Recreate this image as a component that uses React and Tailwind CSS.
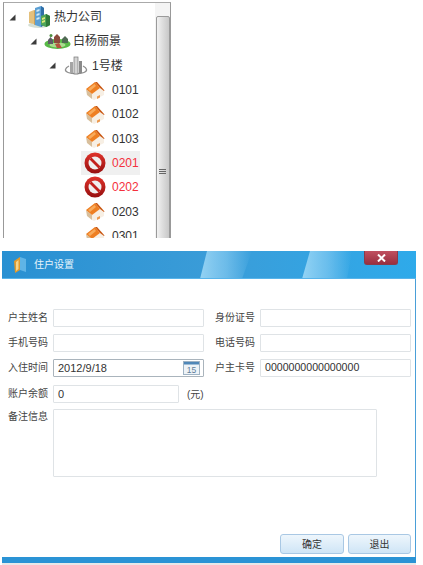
import React from 'react';

const cjk = "font-['Liberation_Sans','Noto_Sans_CJK_SC',sans-serif]";

const Arrow = () => (
    <svg width="7" height="7" viewBox="0 0 7 7" className="shrink-0">
        <path d="M6.500 0.500V6.500H0.500Z" fill="#3c3c3c" />
    </svg>
);

const CompanyIcon = () => (
    <svg width="24" height="24" viewBox="0 0 24 24" className="shrink-0">
        <ellipse cx="12" cy="20" rx="11" ry="3" fill="#d5dfd4" />
        <path d="M2 7l5-2v14l-5-1z" fill="#e4c07c" />
        <path d="M7 5l3 1v13l-3 1z" fill="#c9a05c" />
        <path d="M8 3l6-2 3 2v17l-3 2-6-2z" fill="#5b9fd4" />
        <path d="M14 1l3 2v17l-3 2z" fill="#2f6fa8" />
        <path d="M9.500 5l3-1v2l-3 1zM9.500 9l3-1v2l-3 1zM9.500 13l3-1v2l-3 1z" fill="#cfe9f7" />
        <path d="M14 11l5-2 4 2v9l-4 2-5-2z" fill="#4fa658" />
        <path d="M19 9l4 2v9l-4 2z" fill="#2f7a3a" />
        <path d="M15 13l3-1v2l-3 1zM15 16l3-1v2l-3 1z" fill="#dce87a" />
    </svg>
);

const EstateIcon = () => (
    <svg width="27" height="18" viewBox="0 0 27 18" className="shrink-0">
        <ellipse cx="13.500" cy="12" rx="13" ry="5" fill="#58b947" />
        <ellipse cx="13.500" cy="13" rx="8" ry="2.500" fill="#a9dc8f" />
        <path d="M10 5l3-3 3 3v6h-6z" fill="#8c4a3c" />
        <path d="M4 8l2.500-3 2.500 3v4H4z" fill="#5f5c66" />
        <path d="M18 7l3-3 3 3v4h-6z" fill="#4f6a52" />
        <path d="M11 12l4-1 3 5-5 0z" fill="#b5533f" />
        <circle cx="7" cy="3.500" r="1.500" fill="#4d8d3e" />
    </svg>
);

const TowerIcon = () => (
    <svg width="24" height="20" viewBox="0 0 24 20" className="shrink-0">
        <path d="M5 10C1 12 0 15 4 16.500C8 18 16 18 20 16.500C24 15 23 12 19 10" fill="none" stroke="#8f8f8f" strokeWidth="1.300" />
        <rect x="6" y="6" width="3" height="11" fill="#a5a5a5" />
        <rect x="10" y="1" width="4" height="17" fill="#d4d4d4" stroke="#777" strokeWidth="0.700" />
        <rect x="15" y="5" width="3" height="12" fill="#8a8a8a" />
    </svg>
);

const HouseIcon = () => (
    <svg width="20" height="19" viewBox="0 0 20 19" className="shrink-0">
        <path d="M1 8L7 13V18L2 14Z" fill="#d8bf9c" />
        <path d="M7 13L15 7L19 10V14L9 19L7 18Z" fill="#f7efe4" />
        <path d="M12 15.500L15 14V16.500L12 18Z" fill="#ec9a50" />
        <path d="M1 8L10 1L15 7L7 13Z" fill="#ee7f22" />
        <path d="M10 1L12 1L19.500 9.500L19 10L15 7Z" fill="#c9550f" />
        <path d="M3 8L9.500 3L11 5L5 10Z" fill="#f8ab5c" />
    </svg>
);

const BlockedIcon = () => (
    <svg width="22" height="22" viewBox="0 0 22 22" className="shrink-0">
        <defs>
            <linearGradient id="stop-ring" x1="0" y1="0" x2="0" y2="1">
                <stop offset="0" stopColor="#e0332b" />
                <stop offset="1" stopColor="#960f0f" />
            </linearGradient>
        </defs>
        <circle cx="11" cy="11" r="10.500" fill="url(#stop-ring)" />
        <circle cx="11" cy="11" r="6.500" fill="#f0eeee" />
        <path d="M5.500 7.500L7.500 5.500L16.500 14.500L14.500 16.500Z" fill="#c3201c" />
    </svg>
);

const CalendarIcon = () => (
    <svg width="17" height="14" viewBox="0 0 17 14" className="shrink-0">
        <rect x="0.500" y="0.500" width="16" height="13" fill="#eef3f7" stroke="#9fb3c4" />
        <rect x="1" y="1" width="15" height="2.500" fill="#4f87b8" />
        <text x="8.500" y="12" textAnchor="middle" fontSize="8.500" fill="#5f7f9b" fontFamily="Liberation Sans">15</text>
    </svg>
);

const leaves = [
    { name: '0101' },
    { name: '0102' },
    { name: '0103' },
    { name: '0201', blocked: true, selected: true },
    { name: '0202', blocked: true },
    { name: '0203' },
    { name: '0301' },
];

const TreeRow = ({ className, children }) => (
    <div className={`flex h-[24.3px] items-center text-[12px] text-[#333] ${className}`}>{children}</div>
);

const Tree = () => (
    <div className="ml-[3px] mt-[2px] flex h-[236px] w-[168px] overflow-hidden border-x border-t border-x-[#999] border-t-[#aaa] bg-white">
        <div className="min-w-0 flex-1 overflow-hidden pt-[2px]">
            <TreeRow className="pl-[5px]">
                <Arrow />
                <span className="ml-[11px]"><CompanyIcon /></span>
                <span className="ml-[3px]">热力公司</span>
            </TreeRow>
            <TreeRow className="pl-[26px]">
                <Arrow />
                <span className="ml-[7px]"><EstateIcon /></span>
                <span className="ml-[2px]">白杨丽景</span>
            </TreeRow>
            <TreeRow className="pl-[45px]">
                <Arrow />
                <span className="ml-[8px]"><TowerIcon /></span>
                <span className="ml-[4px]">1号楼</span>
            </TreeRow>
            {leaves.map(leaf => (
                <TreeRow key={leaf.name} className="pl-[77px]">
                    <div className={`flex h-full w-[59px] items-center ${leaf.selected ? 'bg-[#f0f0f0]' : ''}`}>
                        <div className="flex w-[27px] shrink-0 justify-center">
                            {leaf.blocked ? <BlockedIcon /> : <HouseIcon />}
                        </div>
                        <span className={`ml-[4px] ${leaf.blocked ? 'text-[#f4303c]' : ''}`}>{leaf.name}</span>
                    </div>
                </TreeRow>
            ))}
        </div>
        <div className="flex w-[15px] shrink-0 flex-col items-center bg-[#f4f4f4]">
            <svg width="7" height="4" viewBox="0 0 7 4" className="mt-[6px]">
                <path d="M3.500 0L7 4H0Z" fill="#8a8a8a" />
            </svg>
            <div className="mt-[7px] flex h-[230px] w-[14px] shrink-0 flex-col items-center rounded-[2px] border border-[#9a9a9a] bg-gradient-to-r from-[#f2f2f2] via-[#dcdcdc] to-[#c8c8c8] pt-[152px]">
                <div className="h-[1px] w-[7px] bg-[#666]" />
                <div className="mt-[1px] h-[1px] w-[7px] bg-[#666]" />
                <div className="mt-[1px] h-[1px] w-[7px] bg-[#666]" />
            </div>
        </div>
    </div>
);

const TitleBar = () => (
    <div className="relative flex h-[28px] items-center overflow-hidden border-b border-[#58b4ea] bg-gradient-to-r from-[#2890d2] via-[#3a9cd8] to-[#2eaaea] pl-[11px]">
        <svg width="423" height="28" viewBox="0 0 423 28" className="absolute left-0 top-0">
            <defs>
                <linearGradient id="streak" x1="0" y1="0" x2="1" y2="0">
                    <stop offset="0" stopColor="#a4dcf8" stopOpacity="0.85" />
                    <stop offset="0.5" stopColor="#8fd0f4" stopOpacity="0.6" />
                    <stop offset="1" stopColor="#8fd0f4" stopOpacity="0" />
                </linearGradient>
            </defs>
            <path d="M198 28L205 0H250L240 28Z" fill="url(#streak)" />
            <path d="M300 28L308 0H350L345 28Z" fill="url(#streak)" />
        </svg>
        <svg width="14" height="18" viewBox="0 0 14 18" className="relative shrink-0">
            <path d="M1 5l6-4v13l-5 3z" fill="#e09a2e" />
            <path d="M7 1l6 2v13l-6-2z" fill="#5fb4e6" />
            <path d="M3 6l2.500-2v9l-2.500 2z" fill="#f6d48a" />
        </svg>
        <span className={`relative ml-[7px] text-[10px] text-[#e6f4fc] ${cjk}`}>住户设置</span>
        <div className="absolute left-[362px] top-0 flex h-[14px] w-[34px] items-center justify-center rounded-b-[3px] border border-t-0 border-[#8b3a4a] bg-gradient-to-b from-[#c05060] to-[#9a2f40]">
            <svg width="9" height="8" viewBox="0 0 9 8">
                <path d="M1 0.500L8 7.500M8 0.500L1 7.500" stroke="#fff" strokeWidth="2" />
            </svg>
        </div>
    </div>
);

const Label = ({ children, className = '' }) => (
    <span className={`w-[40px] shrink-0 text-[10px] leading-none text-[#444] ${className}`}>{children}</span>
);

const Field = ({ value, className = 'border-[#dfe3e6] text-[11px]', children, width }) => (
    <div className={`ml-[5px] flex h-[18px] items-center justify-between rounded-[1px] border pl-[4px] pr-[3px] text-[#333] ${width} ${className}`}>
        <span>{value}</span>
        {children}
    </div>
);

const DialogButton = ({ children, width }) => (
    <button className={`h-[20px] rounded-[3px] border border-[#a9c8e4] bg-gradient-to-b from-[#eef6fc] to-[#cfe5f6] text-[10px] text-[#333] ${width}`}>
        {children}
    </button>
);

const Dialog = () => (
    <div className={`ml-[2px] mt-[13px] w-[414px] ${cjk}`}>
        <TitleBar />
        <div className="h-[278px] border-r border-[#4a9fd8] bg-white pl-[6px] pt-[30px]">
            <div className="flex flex-col gap-[7px]">
                <div className="flex items-center">
                    <Label>户主姓名</Label>
                    <Field width="w-[151px]" />
                    <Label className="ml-[11px]">身份证号</Label>
                    <Field width="w-[151px]" />
                </div>
                <div className="flex items-center">
                    <Label>手机号码</Label>
                    <Field width="w-[151px]" />
                    <Label className="ml-[11px]">电话号码</Label>
                    <Field width="w-[151px]" />
                </div>
                <div className="flex items-center">
                    <Label>入住时间</Label>
                    <Field width="w-[151px]" className="border-[#aab4bc] text-[11px]" value="2012/9/18">
                        <CalendarIcon />
                    </Field>
                    <Label className="ml-[11px]">户主卡号</Label>
                    <Field width="w-[151px]" className="border-[#dfe3e6] text-[10.6px]" value="0000000000000000" />
                </div>
                <div className="mt-[1px] flex items-center">
                    <Label>账户余额</Label>
                    <Field width="w-[126px]" value="0" />
                    <span className="ml-[8px] text-[10px] text-[#444]">(元)</span>
                </div>
            </div>
            <div className="mt-[6px] flex items-start">
                <Label className="pt-[3px]">备注信息</Label>
                <div className="ml-[5px] h-[68px] w-[324px] rounded-[1px] border border-[#dfe3e6]" />
            </div>
            <div className="mr-[4px] mt-[57px] flex justify-end gap-[4px]">
                <DialogButton width="w-[64px]">确定</DialogButton>
                <DialogButton width="w-[63px]">退出</DialogButton>
            </div>
        </div>
        <div className="h-[6px] bg-[#2a93d5]" />
        <div className="h-[2px] bg-[#e8e8e8]" />
    </div>
);

export default function App() {
    return (
        <div className="h-[565px] w-[423px] overflow-hidden bg-white font-['Liberation_Sans','Noto_Sans_CJK_SC',sans-serif]">
            <Tree />
            <Dialog />
        </div>
    );
}
